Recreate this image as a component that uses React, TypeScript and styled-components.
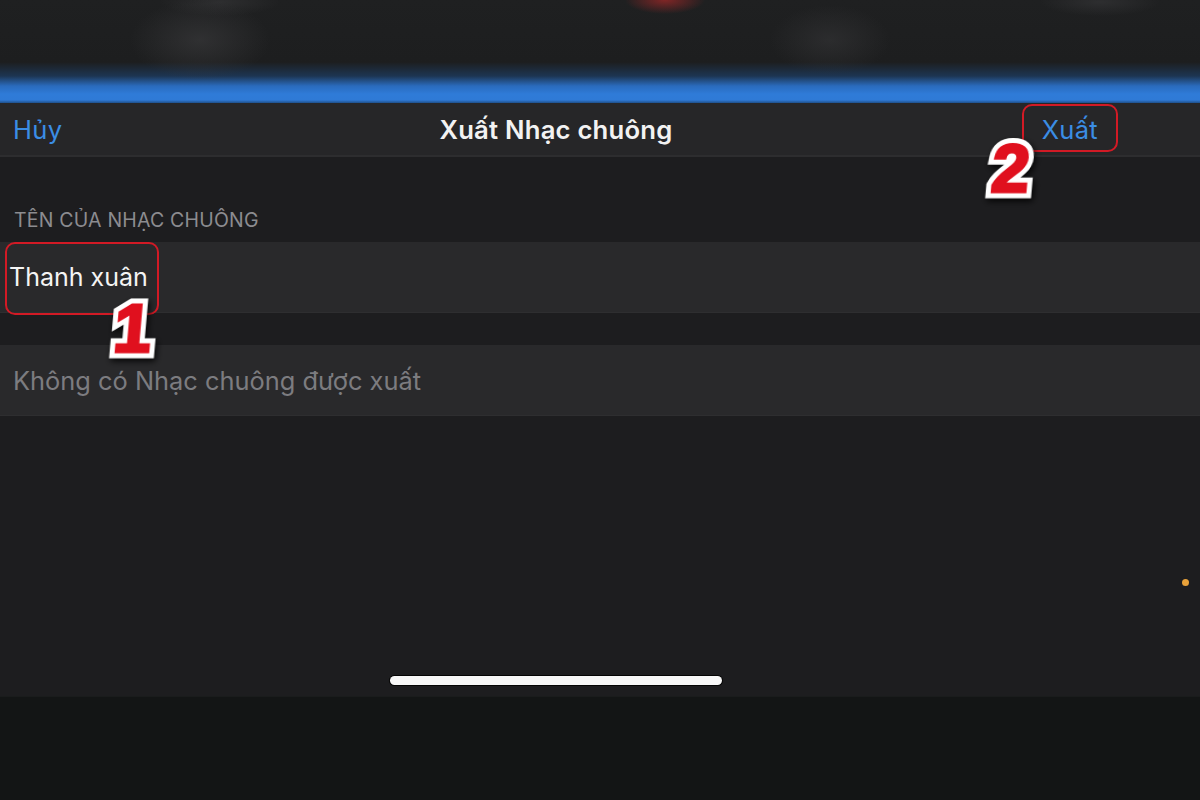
import React from 'react';
import styled, { createGlobalStyle } from 'styled-components';

const GlobalStyle = createGlobalStyle`
  html, body {
    margin: 0;
    padding: 0;
    background: #131515;
  }
  body {
    font-family: Inter, 'Noto Sans', 'Liberation Sans', sans-serif;
    -webkit-font-smoothing: antialiased;
  }
`;

const Screen = styled.div`
  position: relative;
  width: 1200px;
  height: 800px;
  overflow: hidden;
  background: #131515;
  display: flex;
  flex-direction: column;
`;

// blurred strip of the previous screen, fading into the blue bar
const TopBlur = styled.div`
  position: relative;
  height: 103px;
  flex-shrink: 0;
  background:
    radial-gradient(ellipse 40px 14px at 665px 0px, rgba(170, 40, 40, 0.7), transparent),
    radial-gradient(ellipse 70px 40px at 200px 40px, rgba(60, 60, 62, 0.6), transparent),
    radial-gradient(ellipse 60px 35px at 830px 40px, rgba(55, 55, 57, 0.55), transparent),
    radial-gradient(ellipse 60px 14px at 220px 2px, rgba(60, 60, 62, 0.5), transparent),
    radial-gradient(ellipse 60px 14px at 1100px 2px, rgba(60, 60, 62, 0.5), transparent),
    linear-gradient(
      to bottom,
      #1f2021 0px,
      #1d1e1f 62px,
      #1d3552 76px,
      #2a6bbd 86px,
      #2f7bd8 94px,
      #2f7ad6 100px,
      #1f4f8a 103px
    );
`;

const NavBar = styled.div`
  height: 52px;
  flex-shrink: 0;
  display: grid;
  grid-template-columns: 1fr auto 1fr;
  align-items: center;
  padding-right: 88px;
  background: #262628;
  border-bottom: 2px solid #2d2d2f;
`;

const NavButton = styled.span<{ $align: 'left' | 'right' }>`
  justify-self: ${(p) => (p.$align === 'left' ? 'start' : 'end')};
  padding: ${(p) => (p.$align === 'left' ? '0 0 0 13px' : '0 14px 0 0')};
  font-size: 25.5px;
  color: #3b8de4;
  letter-spacing: 0.3px;
`;

const Title = styled.span`
  font-size: 25.7px;
  font-weight: 600;
  color: #f2f2f2;
  letter-spacing: 0.2px;
`;

const Content = styled.div`
  flex: 1;
  display: flex;
  flex-direction: column;
  background: #1d1d1f;
  padding-top: 51px;
`;

const SectionHeader = styled.div`
  padding: 0 14px;
  height: 34px;
  font-size: 19.5px;
  color: #8c8c90;
  letter-spacing: 0.2px;
`;

const Row = styled.div<{ $muted?: boolean }>`
  height: 70px;
  display: flex;
  align-items: center;
  padding-left: ${(p) => (p.$muted ? '13px' : '9px')};
  background: #29292b;
  font-size: ${(p) => (p.$muted ? '25.4px' : '25px')};
  color: ${(p) => (p.$muted ? '#7c7c80' : '#f4f4f4')};
  border-bottom: 1px solid #2e2e30;
`;

const Gap = styled.div`
  height: 32px;
`;

const Spacer = styled.div`
  flex: 1;
`;

const HomeBar = styled.div`
  display: flex;
  justify-content: center;
  padding: 0 88px 11px 0;
`;

const Indicator = styled.div`
  width: 332px;
  height: 9px;
  border-radius: 5px;
  background: #f8f8f8;
  box-shadow: 0 0 0 1px #050505;
`;

const Bottom = styled.div`
  height: 103px;
  flex-shrink: 0;
  background: #131515;
  border-top: 1px solid #1a1c1c;
`;

// red annotation marks laid over the screenshot
const Mark = styled.div<{ $x: number; $y: number; $w: number; $h: number }>`
  position: absolute;
  left: ${(p) => p.$x}px;
  top: ${(p) => p.$y}px;
  width: ${(p) => p.$w}px;
  height: ${(p) => p.$h}px;
  border: 2px solid #d21a25;
  border-radius: 10px;
  box-sizing: border-box;
`;

// white outline underneath, a second red layer on top makes the digit chunkier
const Num = styled.span<{ $x: number; $y: number }>`
  position: absolute;
  left: ${(p) => p.$x}px;
  top: ${(p) => p.$y}px;
  font-family: 'Liberation Sans', Arial, sans-serif;
  font-weight: 700;
  font-size: 68px;
  line-height: 1;
  color: #e0101e;
  -webkit-text-stroke: 13px #ffffff;
  paint-order: stroke fill;
  transform: skewX(-5deg);
  filter: drop-shadow(2px 3px 3px rgba(0, 0, 0, 0.85));

  &::after {
    content: attr(data-n);
    position: absolute;
    left: 0;
    top: 0;
    color: #e0101e;
    -webkit-text-stroke: 3px #e0101e;
  }
`;

const Dot = styled.div`
  position: absolute;
  left: 1182px;
  top: 579px;
  width: 7px;
  height: 7px;
  border-radius: 50%;
  background: #e9a23a;
`;

const App: React.FC = () => {
  return (
    <>
      <GlobalStyle />
      <Screen>
        <TopBlur />
        <NavBar>
          <NavButton $align="left">Hủy</NavButton>
          <Title>Xuất Nhạc chuông</Title>
          <NavButton $align="right">Xuất</NavButton>
        </NavBar>
        <Content>
          <SectionHeader>TÊN CỦA NHẠC CHUÔNG</SectionHeader>
          <Row>Thanh xuân</Row>
          <Gap />
          <Row $muted>Không có Nhạc chuông được xuất</Row>
          <Spacer />
          <HomeBar>
            <Indicator />
          </HomeBar>
        </Content>
        <Bottom />

        <Mark $x={5} $y={242} $w={154} $h={73} />
        <Mark $x={1022} $y={104} $w={96} $h={48} />
        <Num $x={114} $y={294} data-n="1">1</Num>
        <Num $x={992} $y={134} data-n="2">2</Num>
        <Dot />
      </Screen>
    </>
  );
};

export default App;
